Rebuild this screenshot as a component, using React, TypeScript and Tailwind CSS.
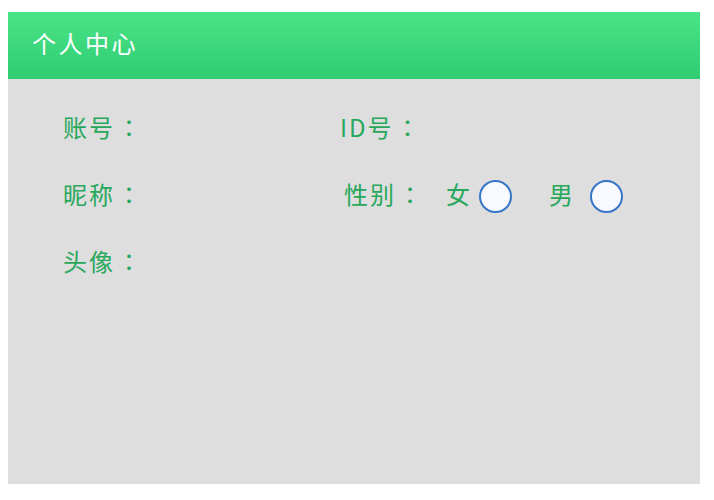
import React from "react";

const font = { fontFamily: '"Noto Sans CJK SC", "Noto Sans", sans-serif' };

function Radio() {
  return (
    <span className="inline-block w-[33px] h-[33px] rounded-full border-2 border-[#3675c7] bg-[#f8faff] box-border" />
  );
}

function Label({ text, className = "" }: { text: string; className?: string }) {
  return (
    <span className={"pb-[4px] tracking-[2px] " + className}>
      {text}
      <span className="ml-[2px] font-['Noto_Sans_CJK_TC',sans-serif]">：</span>
    </span>
  );
}

export default function App() {
  return (
    <div className="w-[714px] h-[500px] bg-white pt-3 pl-2" style={font}>
      <div className="w-[692px] h-[472px] bg-[#dedede] flex flex-col">
        <div className="h-[67px] flex items-center pl-6 pb-[5px] bg-gradient-to-b from-[#4ae488] to-[#2ecc71]">
          <span className="text-white text-[24px] leading-none tracking-[2.5px]">个人中心</span>
        </div>
        <div className="flex flex-col pt-4 text-[#27a85c] text-[24px] leading-none tracking-[1px]">
          <div className="h-[67px] flex items-center">
            <Label text="账号" className="ml-[55px] w-[277px]" />
            <Label text="ID号" />
          </div>
          <div className="h-[67px] flex items-center">
            <Label text="昵称" className="ml-[55px] w-[281px]" />
            <Label text="性别" className="w-[102px]" />
            <span className="pb-[4px]">女</span>
            <span className="ml-[8px] mt-[2px] flex"><Radio /></span>
            <span className="ml-[37px] pb-[4px]">男</span>
            <span className="ml-[16px] mt-[2px] flex"><Radio /></span>
          </div>
          <div className="h-[67px] flex items-center">
            <Label text="头像" className="ml-[55px]" />
          </div>
        </div>
      </div>
    </div>
  );
}
